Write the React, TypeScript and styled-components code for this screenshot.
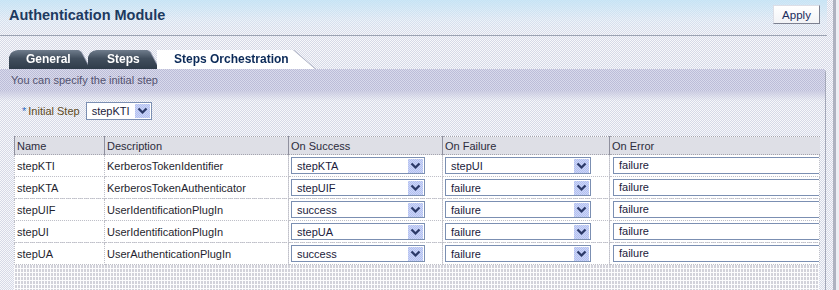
import React from "react";
import styled, { createGlobalStyle, css } from "styled-components";

const GlobalStyle = createGlobalStyle`
  html, body {
    margin: 0;
    padding: 0;
  }
  body {
    font-family: "Liberation Sans", Arial, sans-serif;
    background: #e6e8f0;
  }
`;

const checker = (a: string, b: string) => css`
  background-image: repeating-conic-gradient(${a} 0 25%, ${b} 0 50%);
  background-size: 2px 2px;
`;

const Frame = styled.div`
  width: 839px;
  height: 290px;
  overflow: hidden;
  display: flex;
  ${checker("#d6d9e7", "#f7f8fb")};
`;

const Main = styled.div`
  width: 833px;
  display: flex;
  flex-direction: column;
`;

const Edge = styled.div`
  flex: 1;
  background: linear-gradient(to right, #aeb2c0 0 3px, #eceef3 3px);
`;

const Header = styled.div`
  height: 35px;
  margin-right: 6px;
  display: flex;
  align-items: flex-start;
  justify-content: space-between;
  border-bottom: 1px solid #9ba2b2;
  background: linear-gradient(rgba(196, 228, 246, 0.85), rgba(220, 236, 248, 0.4) 60%, rgba(255, 255, 255, 0));
`;

const Title = styled.h1`
  margin: 0;
  padding: 6px 0 0 9px;
  font-size: 14.5px;
  line-height: 18px;
  font-weight: bold;
  color: #1d3a60;
`;

const ApplyButton = styled.button`
  margin: 5px 7px 0 0;
  width: 47px;
  height: 19px;
  padding: 0;
  font-family: "Liberation Sans", Arial, sans-serif;
  font-size: 11.5px;
  color: #1a2b5c;
  background: linear-gradient(#ffffff, #f2f3f6);
  border: 1px solid #dcdee6;
  border-right-color: #7c8090;
  border-bottom-color: #7c8090;
`;

const TabStrip = styled.div`
  display: flex;
  margin: 14px 0 0 9px;
  height: 19px;
  filter: drop-shadow(1px 0 0 #9ea3b8);
`;

const Tab = styled.div<{ $active?: boolean; $width: number; $pad: number }>`
  width: ${(p) => p.$width}px;
  margin-left: -2px;
  box-sizing: border-box;
  padding-left: ${(p) => p.$pad}px;
  font-size: 12px;
  font-weight: bold;
  line-height: 19px;
  clip-path: polygon(0 100%, 0 7px, 2px 3px, 5px 1px, 9px 0, calc(100% - 12px) 0, calc(100% - 9px) 2px, 100% 100%);
  ${(p) =>
    p.$active
      ? css`
          color: #0b2a58;
          background: #ffffff;
          clip-path: polygon(0 0, calc(100% - 22px) 0, 100% 100%, 0 100%);
        `
      : css`
          color: #ffffff;
          background: linear-gradient(#6f7c8c, #414e5d 45%, #2f3c4a);
        `}
  &:first-child {
    margin-left: 0;
  }
`;

const Panel = styled.div`
  flex: 1;
  display: flex;
  flex-direction: column;
  margin-right: 7px;
  border-right: 1px solid #a3a7b8;
  border-top-right-radius: 4px;
`;

const Hint = styled.div`
  height: 22px;
  padding: 5px 0 0 11px;
  box-sizing: border-box;
  font-size: 11px;
  line-height: 13px;
  color: #535370;
  ${checker("#bcbdd8", "#d9daeb")};
  position: relative;
  &::after {
    content: "";
    position: absolute;
    left: 0;
    right: 0;
    top: 22px;
    height: 10px;
    background: linear-gradient(rgba(200, 201, 224, 0.9), rgba(200, 201, 224, 0));
  }
`;

const FieldRow = styled.div`
  display: flex;
  align-items: center;
  margin: 11px 0 0 22px;
  gap: 6px;
`;

const Label = styled.label`
  font-size: 11px;
  color: #5e4b1c;
`;

const Star = styled.span`
  color: #2f6bc0;
  margin-right: 2px;
`;

const SelectBox = styled.div<{ $width: number; $height: number }>`
  width: ${(p) => p.$width}px;
  height: ${(p) => p.$height}px;
  box-sizing: border-box;
  display: flex;
  align-items: center;
  justify-content: space-between;
  background: #ffffff;
  border: 1px solid #7b8fb2;
  padding: 0 1px 0 5px;
  font-size: 11px;
  color: #1b1b3c;
`;

const DropButton = styled.span`
  width: 15px;
  height: 14px;
  display: flex;
  align-items: center;
  justify-content: center;
  ${checker("#b2c0f0", "#cdd6f8")};
`;

const TextField = styled.div`
  height: 17px;
  box-sizing: border-box;
  margin-left: 3px;
  border: 1px solid #7b8fb2;
  border-right: none;
  background: #ffffff;
  padding-left: 5px;
  font-size: 11px;
  line-height: 15px;
  color: #1b1b3c;
`;

const TableWrap = styled.div`
  flex: 1;
  margin: 16px 0 0 14px;
  width: 805px;
  background-color: #d2d2da;
  background-image: conic-gradient(from 90deg at 1px 1px, transparent 90deg, #fcfcfd 0);
  background-size: 3px 4px;
`;

const Table = styled.table`
  width: 805px;
  table-layout: fixed;
  border-collapse: collapse;
  font-size: 11px;
`;

const HeadCell = styled.th`
  height: 17px;
  padding: 0 0 0 2px;
  text-align: left;
  font-weight: normal;
  color: #2c2c3c;
  border-left: 1px solid #8f909e;
  border-top: 1px dotted #a4a4ae;
  border-bottom: 1px dotted #a4a4ae;
  ${checker("#d2d3dc", "#eaebf0")};
`;

const Cell = styled.td<{ $field?: boolean }>`
  height: 22px;
  box-sizing: border-box;
  padding: 0 0 0 ${(p) => (p.$field ? 0 : 2)}px;
  border: 1px dotted #bfc0c8;
  background: #ffffff;
  color: #1f1f2f;
  white-space: nowrap;
  overflow: hidden;
`;

const CellSelect = styled(SelectBox)`
  margin-left: 2px;
`;

const Chevron = () => (
  <svg width="11" height="8" viewBox="0 0 11 8">
    <polyline points="1.5,1.5 5.5,5.5 9.5,1.5" fill="none" stroke="#2b3966" strokeWidth="2.2" />
  </svg>
);

const Select = ({ value, width, height = 17, inCell }: { value: string; width: number; height?: number; inCell?: boolean }) => {
  const Box = inCell ? CellSelect : SelectBox;
  return (
    <Box $width={width} $height={height}>
      <span>{value}</span>
      <DropButton>
        <Chevron />
      </DropButton>
    </Box>
  );
};

const rows = [
  { name: "stepKTI", desc: "KerberosTokenIdentifier", success: "stepKTA", failure: "stepUI", error: "failure" },
  { name: "stepKTA", desc: "KerberosTokenAuthenticator", success: "stepUIF", failure: "failure", error: "failure" },
  { name: "stepUIF", desc: "UserIdentificationPlugIn", success: "success", failure: "failure", error: "failure" },
  { name: "stepUI", desc: "UserIdentificationPlugIn", success: "stepUA", failure: "failure", error: "failure" },
  { name: "stepUA", desc: "UserAuthenticationPlugIn", success: "success", failure: "failure", error: "failure" },
];

const App = () => {
  return (
    <>
      <GlobalStyle />
      <Frame>
        <Main>
          <Header>
            <Title>Authentication Module</Title>
            <ApplyButton>Apply</ApplyButton>
          </Header>
          <TabStrip>
            <Tab $width={81} $pad={17}>General</Tab>
            <Tab $width={71} $pad={19}>Steps</Tab>
            <Tab $width={158} $pad={17} $active>
              Steps Orchestration
            </Tab>
          </TabStrip>
          <Panel>
            <Hint>You can specify the initial step</Hint>
            <FieldRow>
              <Label>
                <Star>*</Star>Initial Step
              </Label>
              <Select value="stepKTI" width={66} height={18} />
            </FieldRow>
            <TableWrap>
              <Table>
                <colgroup>
                  <col style={{ width: 90 }} />
                  <col style={{ width: 184 }} />
                  <col style={{ width: 154 }} />
                  <col style={{ width: 167 }} />
                  <col style={{ width: 210 }} />
                </colgroup>
                <thead>
                  <tr>
                    <HeadCell>Name</HeadCell>
                    <HeadCell>Description</HeadCell>
                    <HeadCell>On Success</HeadCell>
                    <HeadCell>On Failure</HeadCell>
                    <HeadCell>On Error</HeadCell>
                  </tr>
                </thead>
                <tbody>
                  {rows.map((r) => (
                    <tr key={r.name}>
                      <Cell>{r.name}</Cell>
                      <Cell>{r.desc}</Cell>
                      <Cell $field>
                        <Select value={r.success} width={134} inCell />
                      </Cell>
                      <Cell $field>
                        <Select value={r.failure} width={146} inCell />
                      </Cell>
                      <Cell $field>
                        <TextField>{r.error}</TextField>
                      </Cell>
                    </tr>
                  ))}
                </tbody>
              </Table>
            </TableWrap>
          </Panel>
        </Main>
        <Edge />
      </Frame>
    </>
  );
};

export default App;
